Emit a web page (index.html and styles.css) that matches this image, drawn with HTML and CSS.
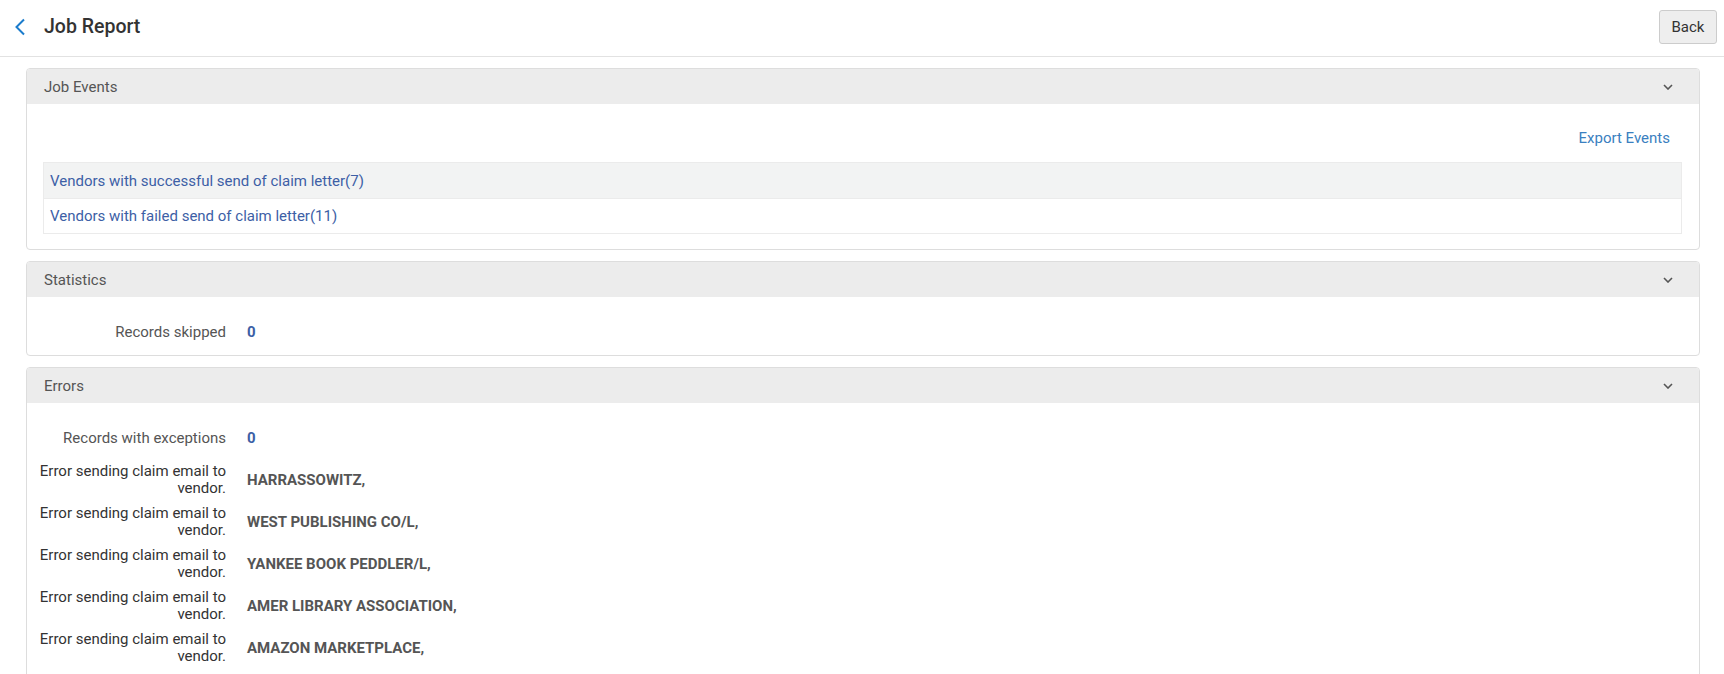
FILE: index.html
```html
<!DOCTYPE html>
<html lang="en">
<head>
<meta charset="utf-8">
<title>Job Report</title>
<link rel="stylesheet" href="styles.css">
</head>
<body>
<header class="topbar">
  <div class="topbar-left">
    <a class="back-link" href="#" aria-label="Back">
      <svg width="12" height="18" viewBox="0 0 12 18"><path d="M10 1.5 L2.5 9 L10 16.5" fill="none" stroke="#1b7ccc" stroke-width="2"/></svg>
    </a>
    <h1 class="title">Job Report</h1>
  </div>
  <button class="btn">Back</button>
</header>

<main class="content">
  <section class="card">
    <div class="card-head">
      <span>Job Events</span>
      <svg class="chev" width="10" height="6" viewBox="0 0 10 6"><path d="M1 1 L5 5 L9 1" fill="none" stroke="#555" stroke-width="1.6"/></svg>
    </div>
    <div class="card-body events">
      <div class="export-row"><a href="#" class="export">Export Events</a></div>
      <div class="event-table">
        <div class="event-row shaded"><a href="#">Vendors with successful send of claim letter(7)</a></div>
        <div class="event-row"><a href="#">Vendors with failed send of claim letter(11)</a></div>
      </div>
    </div>
  </section>

  <section class="card">
    <div class="card-head">
      <span>Statistics</span>
      <svg class="chev" width="10" height="6" viewBox="0 0 10 6"><path d="M1 1 L5 5 L9 1" fill="none" stroke="#555" stroke-width="1.6"/></svg>
    </div>
    <div class="card-body fields">
      <div class="field"><div class="label">Records skipped</div><div class="value num">0</div></div>
    </div>
  </section>

  <section class="card">
    <div class="card-head">
      <span>Errors</span>
      <svg class="chev" width="10" height="6" viewBox="0 0 10 6"><path d="M1 1 L5 5 L9 1" fill="none" stroke="#555" stroke-width="1.6"/></svg>
    </div>
    <div class="card-body fields tall">
      <div class="field"><div class="label">Records with exceptions</div><div class="value num">0</div></div>
      <div class="field"><div class="label dark">Error sending claim email to vendor.</div><div class="value">HARRASSOWITZ,</div></div>
      <div class="field"><div class="label dark">Error sending claim email to vendor.</div><div class="value">WEST PUBLISHING CO/L,</div></div>
      <div class="field"><div class="label dark">Error sending claim email to vendor.</div><div class="value">YANKEE BOOK PEDDLER/L,</div></div>
      <div class="field"><div class="label dark">Error sending claim email to vendor.</div><div class="value">AMER LIBRARY ASSOCIATION,</div></div>
      <div class="field"><div class="label dark">Error sending claim email to vendor.</div><div class="value">AMAZON MARKETPLACE,</div></div>
    </div>
  </section>
</main>
</body>
</html>
```

FILE: styles.css
```css
* { box-sizing: border-box; }
html, body { margin: 0; padding: 0; }
body {
  font-family: Roboto, "Liberation Sans", Arial, sans-serif;
  font-size: 15px;
  color: #555;
  background: #fff;
}
a { text-decoration: none; }

.topbar {
  height: 57px;
  border-bottom: 1px solid #e2e2e2;
  display: flex;
  align-items: center;
  justify-content: space-between;
  padding: 0 7px 0 14px;
}
.topbar-left { display: flex; align-items: center; }
.back-link { display: flex; align-items: center; width: 30px; height: 20px; margin-top: -2px; }
.title {
  margin: 0;
  font-size: 19.5px;
  font-weight: 500;
  color: #333;
  margin-top: -3px;
}
.btn {
  font-family: inherit;
  font-size: 15px;
  color: #333;
  background: #eee;
  border: 1px solid #ccc;
  border-radius: 3px;
  width: 58px;
  height: 34px;
  padding: 0;
  margin-top: -3px;
}

.content {
  padding: 11px 24px 0 26px;
  display: flex;
  flex-direction: column;
  gap: 11px;
}
.card {
  border: 1px solid #ddd;
  border-radius: 4px;
  background: #fff;
}
.card-head {
  height: 35px;
  background: #ececec;
  border-radius: 3px 3px 0 0;
  display: flex;
  align-items: center;
  justify-content: space-between;
  padding: 0 26px 0 17px;
  color: #555;
  font-size: 15px;
}
.chev { margin-top: 1px; }

.events { padding: 24px 17px 15px 16px; }
.export-row {
  display: flex;
  justify-content: flex-end;
  padding-right: 12px;
  line-height: 20px;
  margin-bottom: 14px;
}
.export { color: #3a80c0; font-size: 15px; }
.event-table { border: 1px solid #ebebeb; }
.event-row {
  height: 35px;
  display: flex;
  align-items: center;
  padding-left: 6px;
}
.event-row + .event-row { border-top: 1px solid #ebebeb; }
.event-row.shaded { background: #f2f3f3; }
.event-row a { color: #3d5fa6; font-size: 15px; }

.fields { padding: 14px 0 2px 0; }
.fields.tall { padding-bottom: 40px; }
.field {
  display: flex;
  align-items: center;
  min-height: 42px;
  padding: 4px 0;
}
.label {
  width: 192px;
  margin-left: 7px;
  text-align: right;
  line-height: 17px;
  color: #555;
}
.label.dark { color: #333; }
.value {
  padding-left: 21px;
  font-weight: 700;
  color: #555;
}
.value.num { color: #3d5fa6; }
```
